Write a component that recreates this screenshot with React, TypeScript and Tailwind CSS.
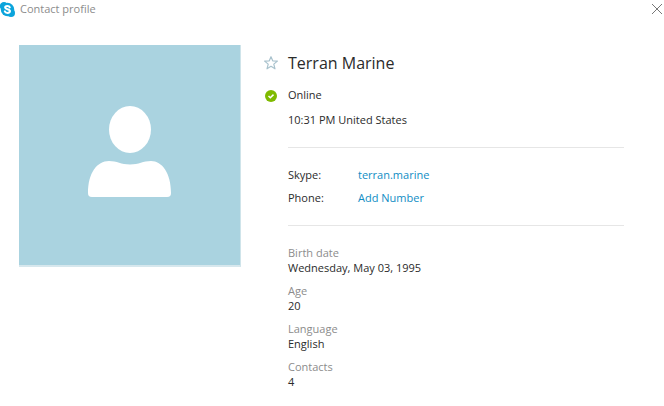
const FACTS = [
  { label: "Birth date", value: "Wednesday, May 03, 1995" },
  { label: "Age", value: "20" },
  { label: "Language", value: "English" },
  { label: "Contacts", value: "4" },
];

function SkypeLogo() {
  return (
    <svg viewBox="0 0 16 16" className="size-4 shrink-0" aria-hidden>
      <g fill="#0ba4dc">
        <circle cx="7.5" cy="8.5" r="6.7" />
        <circle cx="4" cy="5.2" r="4.2" />
        <circle cx="11" cy="12" r="4" />
      </g>
      <path
        d="M9.8 6.4C9.5 5.6 8.6 5.1 7.4 5.1c-1.300 0-2.300.5-2.300 1.500 0 2.100 4.900 1.200 4.900 3.500 0 1.200-1.100 1.800-2.500 1.800-1.300 0-2.300-.5-2.700-1.500"
        fill="none"
        stroke="#fff"
        strokeWidth="2"
        strokeLinecap="round"
      />
    </svg>
  );
}

function Avatar() {
  return (
    <div className="flex h-[222px] w-[222px] shrink-0 border-r border-b-2 border-r-[#cfe4ea] border-b-[#d6e7ed] bg-[#aad3e0]">
      <svg viewBox="0 0 221 220" className="h-full w-full" role="img" aria-label="Profile picture">
        <ellipse cx="111" cy="84.5" rx="21" ry="23.5" fill="#fff" />
        <path
          d="M73 152c-3 0-4-1.5-4-4 0-20 9-32 21-32 8 0 12 3.5 21 3.5s13-3.5 21-3.5c11 0 20 12 20 32 0 2.5-1 4-4 4Z"
          fill="#fff"
        />
      </svg>
    </div>
  );
}

export default function App() {
  return (
    <div className="bg-white font-['Open_Sans','Noto_Sans',sans-serif] text-[11px] text-[#2b2b2b]">
      <header className="flex h-[18px] items-center justify-between pr-0.5">
        <div className="flex items-center gap-1 text-[#8c8c8c]">
          <SkypeLogo />
          <h1>Contact profile</h1>
        </div>
        <button type="button" aria-label="Close">
          <svg viewBox="0 0 10 10" className="size-2.5" stroke="#777" fill="none">
            <path d="M0 0 10 10M10 0 0 10" />
          </svg>
        </button>
      </header>

      <main className="flex items-start gap-[23px] pt-[27px] pr-10 pb-4 pl-[19px]">
        <Avatar />
        <div className="min-w-0 flex-1 pt-1">
          <div className="flex h-7 items-center gap-2.5">
            <button type="button" aria-label="Add to favorites">
              <svg viewBox="0 0 14 14" className="size-3.5" fill="none" stroke="#a9c2cd" strokeWidth="1.2" strokeLinejoin="round">
                <path d="m7 .7 1.700 4.100 4.700.3-3.600 3 1.200 4.700L7 10.300l-4 2.500 1.200-4.700-3.600-3 4.700-.3Z" />
              </svg>
            </button>
            <h2 className="text-base">Terran Marine</h2>
          </div>
          <div className="mt-2 flex h-5 items-center gap-2.5">
            <svg viewBox="0 0 14 14" className="size-3.5" aria-hidden>
              <circle cx="7" cy="8" r="6" fill="#7fba00" />
              <path d="m4.5 8 1.800 1.800L9.500 6.600" fill="none" stroke="#fff" strokeWidth="1.5" />
            </svg>
            <p>Online</p>
          </div>

          <div className="pl-6">
            <p className="mt-[5px] leading-5">10:31 PM United States</p>
            <dl className="mt-[17px] grid grid-cols-[70px_1fr] gap-y-[3px] border-y border-[#e6e6e6] py-[17px] leading-5">
              <dt>Skype:</dt>
              <dd>
                <a href="#chat" className="text-[#0f8dc4]">terran.marine</a>
              </dd>
              <dt>Phone:</dt>
              <dd>
                <button type="button" className="text-[#0f8dc4]">Add Number</button>
              </dd>
            </dl>
            <dl className="flex flex-col gap-2 pt-[19px] leading-[15px]">
              {FACTS.map((f) => (
                <div key={f.label}>
                  <dt className="text-[#8c8c8c]">{f.label}</dt>
                  <dd>{f.value}</dd>
                </div>
              ))}
            </dl>
          </div>
        </div>
      </main>
    </div>
  );
}
